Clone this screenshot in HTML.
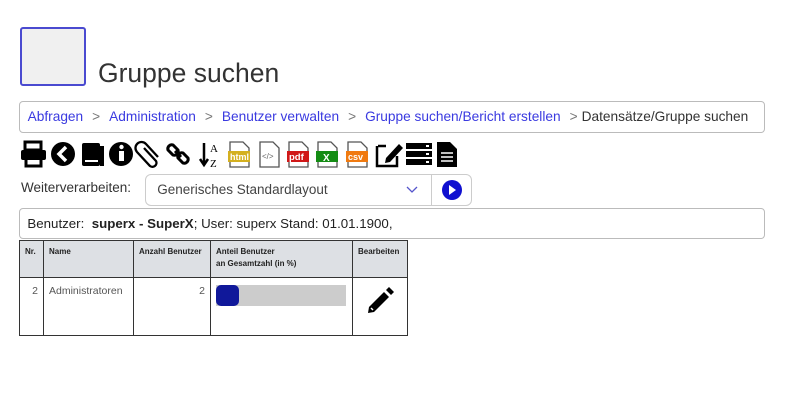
<!DOCTYPE html><html><head><meta charset="utf-8"><style>
body{margin:0;width:800px;height:414px;background:#fff;font-family:"Liberation Sans",sans-serif;position:relative;overflow:hidden}
.a{position:absolute}
.logo{left:20px;top:27px;width:62px;height:55px;background:#f0f0f0;border:2px solid #4a4ad0;border-radius:3px}
h1{position:absolute;left:98px;top:58px;margin:0;font-weight:normal;font-size:26.5px;color:#333}
.bc{left:19px;top:101px;width:744px;height:30px;border:1px solid #bbb;border-radius:4px;font-size:13.7px;line-height:30px;color:#333;white-space:nowrap}
.bc a{color:#3a3ae0;text-decoration:none}
.bc span.g{color:#777;margin:0 9px}
.ic{top:140px;height:28px}
.sel{left:145px;top:174px;width:325px;height:30px;border:1px solid #ccc;border-radius:6px;font-size:13.5px;color:#444;line-height:30px}
.info{left:19px;top:208px;width:744px;height:29px;border:1px solid #bbb;border-radius:4px;font-size:13.3px;line-height:29px;color:#222}
table{position:absolute;left:19px;top:240px;border-collapse:collapse;font-size:8px}
td,th{border:1px solid #333;padding:0 5px}
th{background:#dde0e4;font-weight:bold;text-align:left;height:30px;vertical-align:top;padding-top:6px;color:#222}
td{height:50px;vertical-align:top;padding-top:7px;font-size:10.5px;color:#555}
</style></head><body>
<div class="a logo"></div>
<h1>Gruppe suchen</h1>
<div class="a bc">&nbsp;&nbsp;<a>Abfragen</a><span class="g">&gt;</span><a>Administration</a><span class="g">&gt;</span><a>Benutzer verwalten</a><span class="g">&gt;</span><a>Gruppe suchen/Bericht erstellen</a><span class="g" style="margin-right:4px">&gt;</span>Datensätze/Gruppe suchen</div>
<svg class="a ic" style="left:20px" width="450" height="28" viewBox="0 0 450 28">
<g fill="#000">
<rect x="5" y="2" width="16" height="8" fill="none" stroke="#000" stroke-width="3"/><rect x="1" y="10" width="25" height="10" rx="2"/><rect x="6" y="17" width="15" height="9" fill="none" stroke="#000" stroke-width="3"/>
<circle cx="43" cy="14" r="12"/><path d="M46 7l-7 7 7 7" stroke="#fff" stroke-width="3.5" fill="none"/>
<rect x="62" y="3" width="18" height="23" rx="2"/><rect x="80" y="6" width="4" height="20"/><rect x="65" y="20" width="13" height="2" fill="#fff"/>
<circle cx="101" cy="14" r="12"/><rect x="99" y="11" width="5" height="10" fill="#fff"/><circle cx="101.5" cy="7" r="2.2" fill="#fff"/>
<path d="M124 8l12 13a4 4 0 0 1-6 5l-13-14a6 6 0 0 1 9-8l12 13" fill="none" stroke="#000" stroke-width="2.3"/>
<path d="M153 5a4 4 0 0 0-5 5l5 5a4 4 0 0 0 5-5zM163 13a4 4 0 0 0-5 5l5 5a4 4 0 0 0 5-5zM155 11l6 6" fill="none" stroke="#000" stroke-width="3"/>
<path d="M184 3v20M180 19l4 6 4-6" stroke="#000" stroke-width="2.5" fill="none"/>
<text x="190" y="12" font-size="11" font-family="Liberation Serif">A</text><text x="190" y="27" font-size="11" font-family="Liberation Serif">Z</text>
</g>
<g fill="none" stroke="#555" stroke-width="1.3">
<path d="M210 2h13l6 6v19h-19z"/><path d="M240 2h13l6 6v19h-19z"/><path d="M269 2h13l6 6v19h-19z"/><path d="M298 2h13l6 6v19h-19z"/><path d="M328 2h13l6 6v19h-19z"/>
</g>
<rect x="208" y="11" width="22" height="11" fill="#d4b020"/><text x="210" y="20" font-size="9" fill="#fff" font-weight="bold">html</text>
<text x="242" y="19" font-size="8" fill="#666">&lt;/&gt;</text>
<rect x="267" y="11" width="22" height="11" fill="#d01818"/><text x="269" y="20" font-size="9.5" fill="#fff" font-weight="bold">pdf</text>
<rect x="296" y="11" width="22" height="11" fill="#148c14"/><text x="303" y="21" font-size="10" fill="#fff" font-weight="bold">X</text>
<rect x="326" y="11" width="22" height="11" fill="#f07a10"/><text x="328" y="20" font-size="9" fill="#fff" font-weight="bold">csv</text>
<path d="M358 6h8M357 6v20h20v-10" fill="none" stroke="#000" stroke-width="2.5"/><path d="M366 18l13-14 4 4-13 14-5 1z" fill="#000"/>
<g fill="#000"><rect x="386" y="3" width="26" height="6"/><rect x="386" y="11" width="26" height="6"/><rect x="386" y="19" width="26" height="6"/></g>
<g fill="#fff"><rect x="406" y="5" width="3" height="2"/><rect x="406" y="13" width="3" height="2"/><rect x="406" y="21" width="3" height="2"/></g>
<path d="M417 2h13l7 7v18h-20z" fill="#000"/><g stroke="#fff" stroke-width="1.5"><path d="M421 13h12M421 17h12M421 21h12"/></g>
</svg>
<div class="a" style="left:21px;top:180px;font-size:13.5px;color:#333">Weiterverarbeiten:</div>
<div class="a sel">&nbsp;&nbsp;&nbsp;Generisches Standardlayout
<svg class="a" style="left:260px;top:11px" width="12" height="8"><path d="M1 1l5 5 5-5" stroke="#55c" fill="none" stroke-width="1.3"/></svg>
<div class="a" style="left:285px;top:0;width:1px;height:30px;background:#ccc"></div>
<svg class="a" style="left:295px;top:4px" width="22" height="22"><circle cx="11" cy="11" r="10" fill="#1010d0"/><path d="M8 6l7 5-7 5z" fill="#fff"/></svg></div>
<div class="a info">&nbsp;&nbsp;Benutzer:&nbsp; <b>superx - SuperX</b>; User: superx Stand: 01.01.1900,</div>
<table>
<tr><th style="width:13px">Nr.</th><th style="width:79px">Name</th><th style="width:66px">Anzahl Benutzer</th><th style="width:131px">Anteil Benutzer<br><span style="line-height:16px">an Gesamtzahl (in %)</span></th><th style="width:44px">Bearbeiten</th></tr>
<tr><td style="text-align:right">2</td><td>Administratoren</td><td style="text-align:right">2</td><td><div style="width:130px;height:21px;background:#ccc;position:relative"><div style="width:23px;height:21px;background:#10189a;border-radius:5px"></div></div></td>
<td style="text-align:center"><svg width="30" height="30" viewBox="0 0 30 30"><path d="M4 22l15-15 5 5-15 15-6 1z" fill="#000"/><path d="M21 5l3-3 5 5-3 3z" fill="#000"/><path d="M6 23l2 2" stroke="#fff" stroke-width="1.5"/></svg></td></tr>
</table>
</body></html>
